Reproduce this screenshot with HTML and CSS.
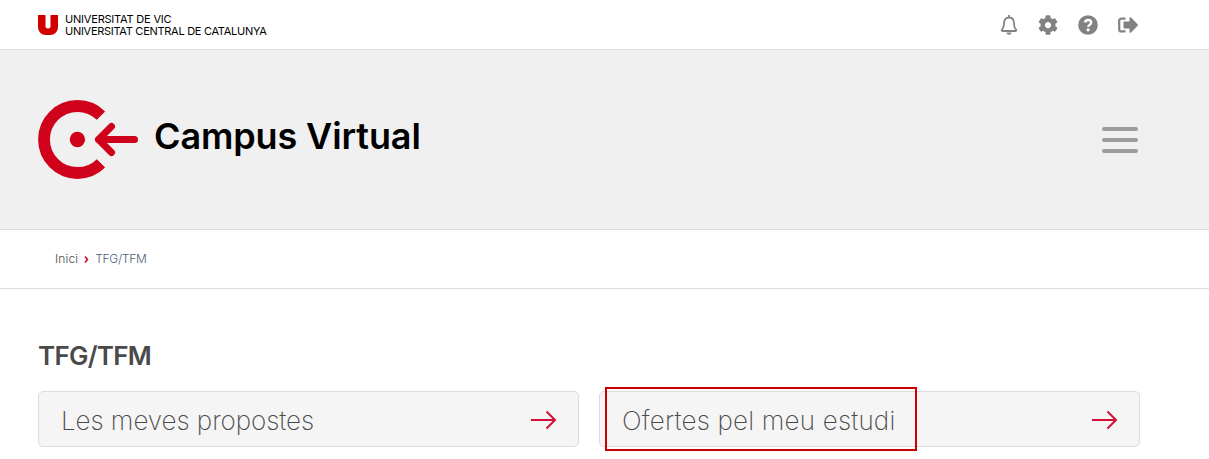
FILE: index.html
```html
<!DOCTYPE html>
<html lang="ca">

<head>
    <meta charset="UTF-8">
    <meta name="viewport" content="width=device-width, initial-scale=1.0">
    <title>Campus Virtual</title>
    <link rel="stylesheet" href="styles.css">
</head>

<body>
    <div class="topbar">
        <a class="university" href="#">
            <svg width="20" height="20" viewBox="0 0 20 20">
                <path d="M0 0h7.500v11a2.500 2.500 0 0 0 5 0V0H20v11.500c0 5.500-3.500 8.500-8 8.500H8c-4.500 0-8-3-8-8.500z" fill="#d00000"/>
            </svg>
            <span class="university-name">
                <span class="line-one">UNIVERSITAT DE VIC</span>
                <span class="line-two">UNIVERSITAT CENTRAL DE CATALUNYA</span>
            </span>
        </a>
        <div class="tools">
            <svg width="18" height="20" viewBox="0 0 18 20">
                <path d="M9 .5v2M2 14.700c1.500-1.500 2-3.200 2-6.200 0-3.600 2-6 5-6s5 2.400 5 6c0 3 .5 4.700 2 6.200.6.600.3 1.300-.4 1.300H2.400c-.7 0-1-.7-.4-1.300z" fill="none" stroke="#828282" stroke-width="1.800" stroke-linecap="round"/>
                <path d="M6.500 17.500h5a2.500 2.200 0 0 1-5 0z" fill="#828282"/>
            </svg>
            <svg width="20" height="20" viewBox="0 0 512 512">
                <path d="M487.400 315.700l-42.600-24.600c4.300-23.200 4.300-47 0-70.200l42.600-24.600c4.900-2.800 7.100-8.600 5.500-14-11.100-35.600-30-67.800-54.700-94.600-3.800-4.100-10-5.100-14.800-2.300L380.800 110c-17.900-15.400-38.500-27.300-60.800-35.100V25.800c0-5.600-3.900-10.500-9.400-11.700-36.700-8.200-74.300-7.800-109.200 0-5.500 1.200-9.400 6.100-9.400 11.700V75c-22.200 7.900-42.800 19.800-60.800 35.100L88.700 85.500c-4.900-2.800-11-1.900-14.800 2.300-24.700 26.700-43.600 58.900-54.700 94.600-1.700 5.400.6 11.200 5.500 14L67.300 221c-4.300 23.200-4.300 47 0 70.200l-42.600 24.600c-4.900 2.800-7.100 8.600-5.500 14 11.100 35.600 30 67.800 54.700 94.600 3.800 4.100 10 5.100 14.800 2.300l42.600-24.600c17.900 15.400 38.500 27.300 60.800 35.100v49.200c0 5.600 3.900 10.500 9.400 11.700 36.700 8.200 74.300 7.800 109.200 0 5.500-1.200 9.400-6.100 9.400-11.700v-49.200c22.200-7.900 42.800-19.800 60.800-35.100l42.600 24.600c4.900 2.800 11 1.900 14.800-2.300 24.700-26.700 43.600-58.900 54.700-94.600 1.500-5.500-.7-11.300-5.600-14.100zM256 336c-44.100 0-80-35.900-80-80s35.900-80 80-80 80 35.900 80 80-35.900 80-80 80z" fill="#828282"/>
            </svg>
            <svg width="20" height="20" viewBox="0 0 20 20">
                <circle cx="10" cy="10" r="9.800" fill="#828282"/>
                <path d="M6.900 7.400C7.500 5.700 8.600 5 10.100 5c1.700 0 3.100 1 3.100 2.600 0 2.300-3 2.200-3 4.300" fill="none" stroke="#fff" stroke-width="2.400"/>
                <circle cx="10.100" cy="14.800" r="1.600" fill="#fff"/>
            </svg>
            <svg width="20" height="16" viewBox="0 0 20 16">
                <path d="M7.500 1.600H3.200a2 2 0 0 0-2 2v8.800a2 2 0 0 0 2 2h4.300" fill="none" stroke="#828282" stroke-width="2.200"/>
                <path d="M5.500 5.500a.9.900 0 0 1 .9-.9h5.100V1.300c0-.9 1-1.300 1.600-.7l6.500 6.700a1 1 0 0 1 0 1.400l-6.500 6.700c-.6.600-1.600.2-1.600-.7v-3.300H6.400a.9.900 0 0 1-.9-.9z" fill="#828282"/>
            </svg>
        </div>
    </div>

    <header class="header">
        <a class="brand" href="#">
            <svg width="101" height="80" viewBox="0 0 101 80">
                <path d="M63 15.600A33.500 33.500 0 1 0 63 63.400" fill="none" stroke="#d0021b" stroke-width="11.800"/>
                <circle cx="39.400" cy="39.500" r="7.700" fill="#d0021b"/>
                <path d="M60.500 39.500h36M73.500 26.500l-13 13 13 13" fill="none" stroke="#d0021b" stroke-width="7" stroke-linecap="round" stroke-linejoin="round"/>
            </svg>
            <span class="brand-name">Campus Virtual</span>
        </a>
        <div class="menu-button">
            <span></span>
            <span></span>
            <span></span>
        </div>
    </header>

    <nav class="breadcrumb">
        <a class="home" href="#">Inici</a>
        <svg width="5" height="7" viewBox="0 0 5 7">
            <path d="M1 .5l2.500 3L1 6.500" fill="none" stroke="#c8102e" stroke-width="1.600"/>
        </svg>
        <a class="current" href="#">TFG/TFM</a>
    </nav>

    <main class="content">
        <h1>TFG/TFM</h1>
        <div class="options">
            <a class="option" href="#">
                <span class="option-name proposals">Les meves propostes</span>
                <svg width="26" height="20" viewBox="0 0 26 20">
                    <path d="M0 10h24M15.500 1.500L24 10l-8.500 8.500" fill="none" stroke="#d50f35" stroke-width="2"/>
                </svg>
            </a>
            <a class="option" href="#">
                <span class="option-name offers">Ofertes pel meu estudi</span>
                <svg width="26" height="20" viewBox="0 0 26 20">
                    <path d="M0 10h24M15.500 1.500L24 10l-8.500 8.500" fill="none" stroke="#d50f35" stroke-width="2"/>
                </svg>
                <span class="highlight"></span>
            </a>
        </div>
    </main>
</body>

</html>
```
FILE: styles.css
```css
* {
    box-sizing: border-box;
}

body {
    margin: 0;
    min-height: 100vh;
    background-color: #fff;
    color: #4a4a4a;
    font-family: Inter, "Liberation Sans", sans-serif;
}

a {
    color: inherit;
    text-decoration: none;
}

svg {
    display: block;
    flex-shrink: 0;
}

/* Top bar */
.topbar {
    display: flex;
    justify-content: space-between;
    align-items: center;
    height: 50px;
    padding: 1px 71px 0 38px;
    border-bottom: 1px solid #dcdcdc;
}

.university {
    display: flex;
    align-items: center;
    gap: 7px;
    color: #000;
}

.university-name {
    display: flex;
    flex-direction: column;
    font-size: 11px;
    line-height: 12px;
    white-space: nowrap;
}

.line-one {
    letter-spacing: -0.2px;
}

.line-two {
    letter-spacing: -0.28px;
}

.tools {
    display: flex;
    align-items: center;
    gap: 20px;
}

/* Header with the logo and the menu */
.header {
    display: flex;
    justify-content: space-between;
    align-items: center;
    height: 180px;
    padding: 0 71px 0 38px;
    background-color: #f0f0f0;
    border-bottom: 1px solid #dcdcdc;
}

.brand {
    display: flex;
    align-items: center;
    gap: 15px;
    color: #000;
}

.brand-name {
    padding-bottom: 8px;
    font-size: 36px;
    font-weight: 600;
    line-height: 44px;
    letter-spacing: -0.12px;
}

.menu-button {
    display: flex;
    flex-direction: column;
    gap: 7px;
}

.menu-button span {
    width: 36px;
    height: 4px;
    border-radius: 2px;
    background-color: #9b9b9b;
}

/* Breadcrumb */
.breadcrumb {
    display: flex;
    align-items: center;
    gap: 6px;
    height: 59px;
    padding: 0 55px;
    border-bottom: 1px solid #dcdcdc;
    font-size: 12px;
    font-weight: 300;
}

.breadcrumb a {
    padding-bottom: 2px;
}

.home {
    letter-spacing: 0.15px;
}

.current {
    color: #4c6078;
    letter-spacing: -0.3px;
}

/* Content */
.content {
    padding: 51px 69px 12px 38px;
}

h1 {
    margin: 0 0 19px;
    font-size: 26px;
    font-weight: 600;
    line-height: 32px;
    letter-spacing: -0.75px;
}

.options {
    display: grid;
    grid-template-columns: 1fr 1fr;
    gap: 20px;
}

.option {
    position: relative;
    display: flex;
    justify-content: space-between;
    align-items: center;
    height: 56px;
    padding: 2px 21px 0 22px;
    border: 1px solid #dcdcdc;
    border-radius: 5px;
    background-color: #f5f5f5;
}

.option-name {
    padding-top: 1px;
    font-size: 26px;
    font-weight: 200;
    line-height: 32px;
    white-space: nowrap;
}

.proposals {
    letter-spacing: -0.05px;
}

.offers {
    letter-spacing: 0.2px;
}

/* Frame around the selected option */
.highlight {
    position: absolute;
    top: -5px;
    left: 5px;
    width: 312px;
    height: 64px;
    border: 2px solid #c00;
}
```
